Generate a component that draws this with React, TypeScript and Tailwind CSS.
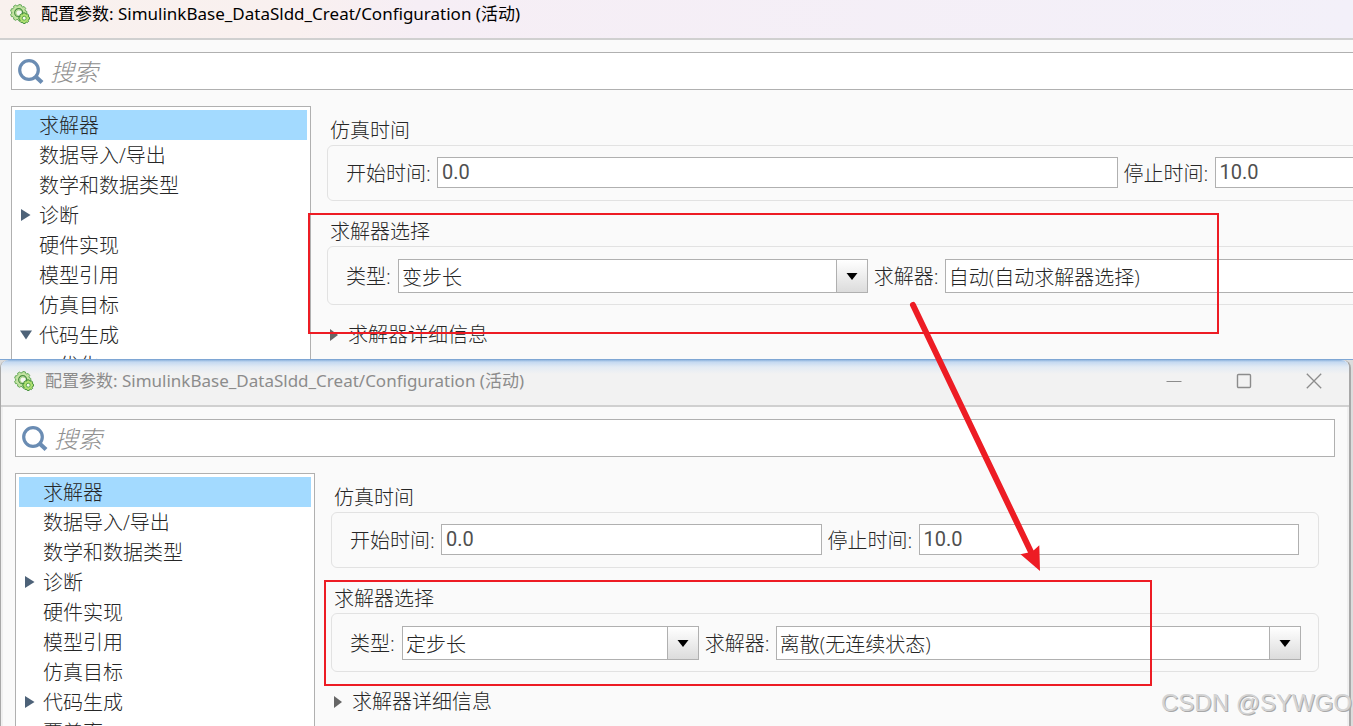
import { useId } from "react";

type TreeItem = { label: string; state?: "closed" | "open"; child?: boolean };

type DialogProps = {
  active: boolean;
  tree: TreeItem[];
  type: string;
  solver: string;
};

const baseItems: TreeItem[] = [
  { label: "求解器" },
  { label: "数据导入/导出" },
  { label: "数学和数据类型" },
  { label: "诊断", state: "closed" },
  { label: "硬件实现" },
  { label: "模型引用" },
  { label: "仿真目标" },
];

function gearPath(cx: number, cy: number, outer: number, inner: number, teeth: number) {
  const points: string[] = [];
  const step = (Math.PI * 2) / teeth;
  for (let i = 0; i < teeth; i++) {
    const a = i * step;
    const corners: [number, number][] = [
      [-0.36, inner],
      [-0.22, outer],
      [0.22, outer],
      [0.36, inner],
    ];
    for (const [offset, radius] of corners) {
      const t = a + offset * step;
      points.push(`${(cx + radius * Math.cos(t)).toFixed(2)} ${(cy + radius * Math.sin(t)).toFixed(2)}`);
    }
  }
  return `M${points.join("L")}Z`;
}

function GearsIcon() {
  return (
    <svg className="size-5 shrink-0" viewBox="0 0 20 20" aria-hidden="true">
      <g strokeLinejoin="round">
        <path d={gearPath(8.7, 8.7, 8.2, 7, 9)} fill="#c3e3a2" stroke="#62a856" strokeWidth="1" />
        <circle cx="8.7" cy="8.7" r="3.9" fill="#f6f7f2" stroke="#4a8f42" strokeWidth="1.5" />
        <path d="M10.8 6.6A3 3 0 1 0 8.2 11.8" fill="none" stroke="#a9d488" strokeWidth="1.2" />
        <path d={gearPath(14.2, 14.2, 5.4, 4.6, 8)} fill="#b0e070" stroke="#438f3c" strokeWidth="1" />
        <circle cx="14.2" cy="14.2" r="2" fill="#f4f9ec" stroke="#5aa648" strokeWidth="1" />
      </g>
    </svg>
  );
}

function SearchIcon() {
  return (
    <svg className="size-7 shrink-0" viewBox="0 0 28 28" fill="none" stroke="#6a8cb3" aria-hidden="true">
      <circle cx="13" cy="13" r="9.3" strokeWidth="3.2" />
      <path d="M19.3 19.3L26 25.5" strokeWidth="4.2" />
    </svg>
  );
}

function TreeArrow({ open }: { open: boolean }) {
  return (
    <svg className="size-3" viewBox="0 0 12 12" fill="#4d6278" aria-hidden="true">
      <path d={open ? "M0 1.5H12L6 10.5Z" : "M1 0V12L10.5 6Z"} />
    </svg>
  );
}

function TextField({ label, value }: { label: string; value: string }) {
  const id = useId();
  return (
    <>
      <label htmlFor={id} className="w-[85px] shrink-0 pt-0.5 whitespace-nowrap">
        {label}
      </label>
      <input
        id={id}
        defaultValue={value}
        className="h-[31px] min-w-0 flex-1 basis-0 border border-[#b0b0b0] bg-white px-1 pb-0.5 font-['Roboto','Noto_Sans_CJK_SC',sans-serif] font-normal text-[#505050] outline-none"
      />
    </>
  );
}

function SelectField({
  label,
  value,
  labelClass,
  boxClass,
}: {
  label: string;
  value: string;
  labelClass: string;
  boxClass: string;
}) {
  const id = useId();
  return (
    <>
      <label htmlFor={id} className={`shrink-0 pt-0.5 whitespace-nowrap ${labelClass}`}>
        {label}
      </label>
      <div className={`relative min-w-0 ${boxClass}`}>
        <select
          id={id}
          className="block h-[34px] w-full appearance-none border border-[#b0b0b0] bg-white pt-1 pr-8 pl-[3px] outline-none"
        >
          <option>{value}</option>
        </select>
        <span className="pointer-events-none absolute inset-y-px right-px flex w-[31px] items-center justify-center border-l border-[#b0b0b0] bg-linear-to-b from-white to-[#dcdcdc]">
          <svg className="h-[7px] w-3" viewBox="0 0 12 7" aria-hidden="true">
            <path d="M0.5 0H11.5L6 7Z" fill="#000" />
          </svg>
        </span>
      </div>
    </>
  );
}

function ConfigDialog({ active, tree, type, solver }: DialogProps) {
  return (
    <div
      className={
        active
          ? "-mt-[7px] -ml-[3px] w-[calc(100%+595px)] shrink-0 bg-[#fafafa]"
          : "mr-0.5 min-h-full rounded-t-lg border-r-2 border-l border-[#a8a8a8] bg-[#fafafa]"
      }
    >
      <header
        className={`flex h-[47px] items-center border-b-2 border-[#d0d0d0] pr-[27px] pb-1 pl-[13px] ${
          active
            ? "bg-[linear-gradient(to_right,#f9f1ee_0px,#f9f0ef_300px,#f6eef5_420px,#f3f0f9_1353px)] text-black"
            : "rounded-t-lg bg-[linear-gradient(to_bottom,#8fb4de_0px,#c4d9f1_2px,#e3ebf4_7px,#f2f2f2_14px)] text-[#8c8c8c]"
        }`}
      >
        <GearsIcon />
        <h1 className="ml-[11px] flex-1 whitespace-nowrap font-['Noto_Sans','Noto_Sans_CJK_SC',sans-serif] text-[17px] font-normal">
          配置参数: SimulinkBase_DataSldd_Creat/Configuration (活动)
        </h1>
        <div className="flex items-center gap-[54px] text-[#8c8c8c]">
          <button aria-label="最小化">
            <svg className="size-4" viewBox="0 0 16 16" fill="none" stroke="currentColor" aria-hidden="true">
              <path d="M0.5 8.5H15.5" />
            </svg>
          </button>
          <button aria-label="最大化">
            <svg className="size-4" viewBox="0 0 16 16" fill="none" stroke="currentColor" strokeWidth="1.4" aria-hidden="true">
              <rect x="1.5" y="1.5" width="13" height="13" rx="1" />
            </svg>
          </button>
          <button aria-label="关闭">
            <svg className="size-4" viewBox="0 0 16 16" fill="none" stroke="currentColor" strokeWidth="1.3" aria-hidden="true">
              <path d="M0.8 0.8L15.2 15.2M15.2 0.8L0.8 15.2" />
            </svg>
          </button>
        </div>
      </header>

      <div className="border-x-2 border-[#f0f0f0] px-3 pt-3">
        <div className="flex h-[38px] items-center border border-[#b0b0b0] bg-white pl-1">
          <SearchIcon />
          <input
            type="search"
            aria-label="搜索"
            placeholder="搜索"
            className="ml-1.5 min-w-0 flex-1 pt-0.5 text-2xl italic outline-none placeholder:text-[#909090]"
          />
        </div>

        <div className="mt-4 flex gap-4">
          <nav className="w-[300px] shrink-0 border border-[#b0b0b0] bg-white p-[3px]">
            <ul>
              {tree.map((item, index) => (
                <li key={item.label} className={index === 0 ? "bg-[#a3daff]" : ""}>
                  <button className={`flex h-[30px] w-full items-center pt-0.5 ${item.child ? "pl-5" : ""}`}>
                    <span className="flex w-6 shrink-0 pb-0.5 pl-[5px]">
                      {item.state && <TreeArrow open={item.state === "open"} />}
                    </span>
                    {item.label}
                  </button>
                </li>
              ))}
            </ul>
          </nav>

          <main className="min-w-0 flex-1 pt-3 pr-4 leading-6">
            <section>
              <h2 className="mb-0.5 pt-px pl-[3px]">仿真时间</h2>
              <div className="flex items-center gap-1.5 rounded-md border border-[#e2e2e2] pt-[11px] pr-[19px] pb-3 pl-[18px]">
                <TextField label="开始时间:" value="0.0" />
                <TextField label="停止时间:" value="10.0" />
              </div>
            </section>
            <section className="mt-[18px]">
              <h2 className="mb-0.5 pt-px pl-[3px]">求解器选择</h2>
              <div className="flex items-center gap-1.5 rounded-md border border-[#e2e2e2] pt-3 pr-[17px] pb-[11px] pl-[18px]">
                <SelectField label="类型:" value={type} labelClass="w-[46px]" boxClass="flex-[173_1_84px]" />
                <SelectField label="求解器:" value={solver} labelClass="w-[65px]" boxClass="flex-[427_1_0px]" />
              </div>
            </section>
            <button className="mt-[18px] flex items-center gap-2.5 pl-[3px]">
              <svg className="h-3 w-2" viewBox="0 0 8 12" fill="#666" aria-hidden="true">
                <path d="M0 0L8 6L0 12Z" />
              </svg>
              求解器详细信息
            </button>
          </main>
        </div>
      </div>
    </div>
  );
}

export default function App() {
  return (
    <div className="relative flex h-screen flex-col overflow-hidden bg-[#dcdcdc] font-['Open_Sans','Noto_Sans_CJK_SC',sans-serif] text-xl font-light text-[#262626]">
      <div className="h-[359px] shrink-0 overflow-hidden">
        <ConfigDialog
          active
          tree={[...baseItems, { label: "代码生成", state: "open" }, { label: "优化", child: true }]}
          type="变步长"
          solver="自动(自动求解器选择)"
        />
      </div>
      <div className="min-h-0 flex-1 overflow-hidden border-t border-[#7ea6d4]">
        <ConfigDialog
          active={false}
          tree={[...baseItems, { label: "代码生成", state: "closed" }, { label: "覆盖率" }]}
          type="定步长"
          solver="离散(无连续状态)"
        />
      </div>

      <div className="pointer-events-none absolute top-[213px] left-[308px] h-[121px] w-[911px] border-2 border-[#ed1c24]" />
      <div className="pointer-events-none absolute top-[580px] left-[324px] h-[106px] w-[828px] border-2 border-[#ed1c24]" />
      <svg
        className="pointer-events-none absolute top-[300px] left-[905px] h-[275px] w-[140px]"
        viewBox="905 300 140 275"
        aria-hidden="true"
      >
        <path d="M913 305L1032 554" stroke="#ed1c24" strokeWidth="6" strokeLinecap="round" />
        <path d="M1040 571L1020.5 554.3L1028.5 552.5L1033.5 550.5L1039.3 545.3Z" fill="#ed1c24" />
      </svg>
      <p className="pointer-events-none absolute top-[687px] left-[1161px] whitespace-nowrap font-['Liberation_Sans',sans-serif] text-2xl font-normal text-[#d4d4d4] [text-shadow:1px_1px_0px_#a8a8a8]">
        CSDN @SYWGO
      </p>
    </div>
  );
}
